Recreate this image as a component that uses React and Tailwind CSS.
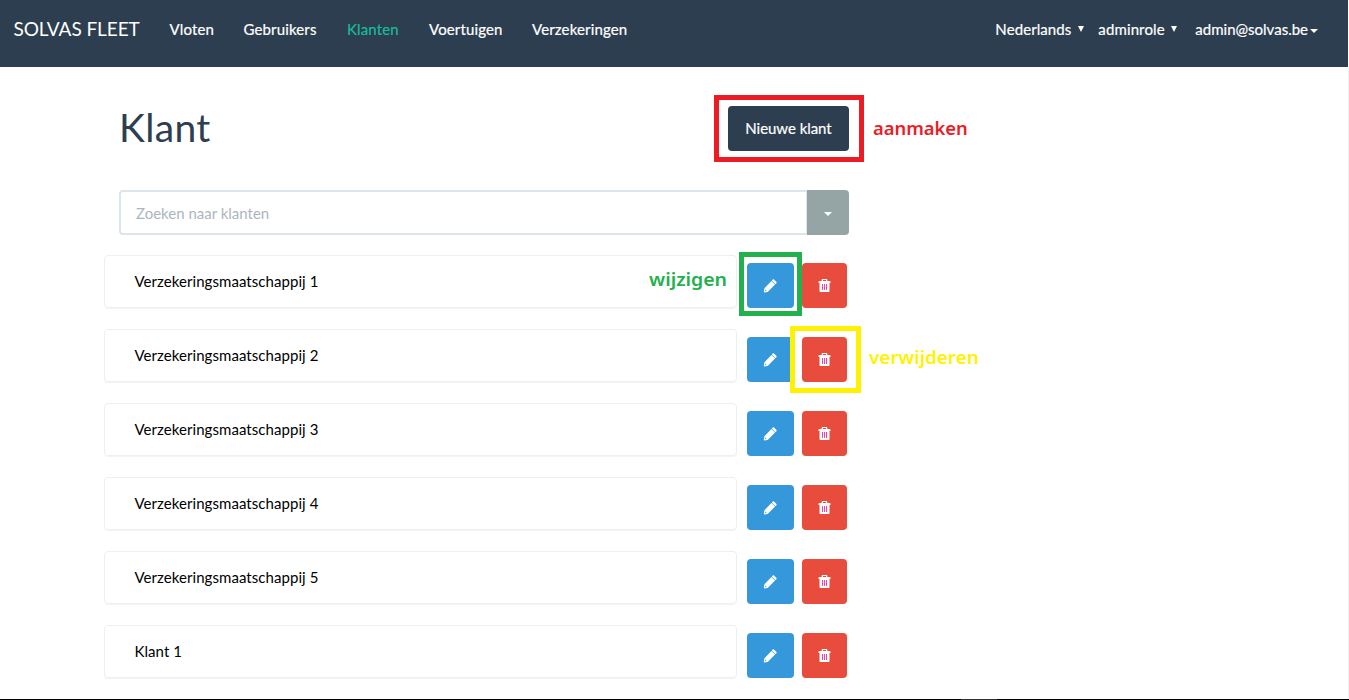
const navItems = [
  { label: "Vloten", width: "w-[74px]" },
  { label: "Gebruikers", width: "w-[103.5px]" },
  { label: "Klanten", width: "w-[82px]" },
  { label: "Voertuigen", width: "w-[103px]" },
  { label: "Verzekeringen", width: "w-[100px]" },
];

const customers = [
  "Verzekeringsmaatschappij 1",
  "Verzekeringsmaatschappij 2",
  "Verzekeringsmaatschappij 3",
  "Verzekeringsmaatschappij 4",
  "Verzekeringsmaatschappij 5",
  "Klant 1",
];

function Caret() {
  return (
    <svg className="h-1 w-2" viewBox="0 0 8 4" fill="currentColor">
      <path d="M0 0h8L4 4z" />
    </svg>
  );
}

function SelectArrow() {
  return (
    <svg className="mb-0.5 h-1.5 w-1.5" viewBox="0 0 6 6" fill="currentColor">
      <path d="M0 0h6L3 6z" />
    </svg>
  );
}

function PencilIcon() {
  return (
    <svg className="mr-px h-[14px] w-[14px]" viewBox="0 0 14 14" fill="#fff">
      <path d="M9.600.7c.5-.5 1.100-.5 1.600 0l2.100 2.100c.5.5.5 1.100 0 1.600l-.9.900-3.700-3.700z" />
      <path d="M8.400 1.900l3.700 3.700-6.700 6.700c-.3.3-.6.5-1 .6l-2.800.5c-.6.1-.9-.2-.8-.8l.5-2.800c.1-.4.3-.7.600-1z" />
      <path d="M2.300 10.600l1.300 1.300-.7.300-.9-.8z" fill="#3498db" />
    </svg>
  );
}

function TrashIcon() {
  return (
    <svg className="h-[13px] w-[13px]" viewBox="0 0 13 13" fill="#fff">
      <path d="M4.700 0h3.600c.7 0 1 .3 1 1v1h2.400c.5 0 .8.300.8.800V4H.5V2.800c0-.5.3-.8.8-.8h2.400V1c0-.7.3-1 1-1zm.3 1v1h3V1z" />
      <path d="M1.500 3.500h10V12c0 .6-.4 1-1 1h-8c-.6 0-1-.4-1-1z" />
      <path d="M4 5h1v6H4zM6 5h1v6H6zM8 5h1v6H8z" fill="#ef45a8" />
    </svg>
  );
}

export default function App() {
  return (
    <div className="relative flex h-[700px] w-[1349px] flex-col overflow-hidden bg-white font-['Lato',sans-serif] text-[15px] leading-[21px] text-black">
      <nav className="mr-px flex h-[67px] shrink-0 items-start justify-between bg-[#2c3e50] pt-[19px] text-white">
        <div className="flex">
          <a className="-mt-px w-[155px] pl-[13.5px] text-[19px] tracking-[-0.08px]">SOLVAS FLEET</a>
          <div className="flex pl-[14.5px] tracking-[0.14px] [-webkit-text-stroke:0.2px_currentColor]">
            {navItems.map(({ label, width }) => (
              <a key={label} className={`${width} ${label === "Klanten" ? "text-[#18bc9c]" : ""}`}>
                {label}
              </a>
            ))}
          </div>
        </div>
        <div className="flex pr-[30px] [-webkit-text-stroke:0.2px_currentColor]">
          <a className="flex w-[103px] items-center justify-between pr-[14px] tracking-[0.08px]">Nederlands <SelectArrow /></a>
          <a className="flex w-[97px] items-center justify-between pr-[18px] tracking-[0.12px]">adminrole <SelectArrow /></a>
          <a className="flex items-center gap-[2px]">admin@solvas.be <span className="pt-0.5"><Caret /></span></a>
        </div>
      </nav>

      <main className="min-h-0 grow border-r border-[#f0f0f0] pl-[104px]">
        <header className="ml-[15px] flex w-[730px] items-center justify-between pt-[39px]">
          <h1 className="-mt-0.5 text-[39px] leading-[45px] tracking-[0.35px] text-[#2c3e50]">Klant</h1>
          <button className="h-[45px] w-[121px] rounded bg-[#2c3e50] tracking-[-0.05px] text-white [-webkit-text-stroke:0.2px_currentColor]">
            Nieuwe klant
          </button>
        </header>

        <div className="mt-[39px] ml-[15px] flex h-[45px] w-[730px]">
          <input
            className="min-w-0 grow rounded-l border-2 border-r border-[#dce4ec] px-[15px] pt-0.5 placeholder:text-[#acb6c0] placeholder:opacity-100"
            placeholder="Zoeken naar klanten"
          />
          <button className="flex w-[42px] items-center justify-center rounded-r bg-[#95a5a6] pt-[3px] text-white">
            <Caret />
          </button>
        </div>

        <ul className="mt-5 flex flex-col gap-[21px]">
          {customers.map((name) => (
            <li key={name} className="flex h-[53px] items-end">
              <div className="h-[53px] w-[633px] rounded border border-[#ecf0f1] pt-[15px] pl-[29.500px] tracking-[0.06px] shadow-[0_1px_1px_rgba(0,0,0,0.05)]">
                {name}
              </div>
              <button className="ml-[10px] flex h-[45px] w-[47px] items-center justify-center rounded bg-[#3498db]">
                <PencilIcon />
              </button>
              <button className="ml-2 flex h-[45px] w-[45px] items-center justify-center rounded bg-[#e74c3c]">
                <TrashIcon />
              </button>
            </li>
          ))}
        </ul>
      </main>

      <footer className="flex h-px shrink-0 bg-black pl-[961px]">
        <span className="h-px w-9 bg-[#333]" />
      </footer>

      <div className="absolute top-[95px] left-[714px] h-[67px] w-[150px] border-5 border-[#ed1c24]" />
      <span className="absolute top-[116px] left-[873px] origin-left scale-x-[1.02] font-['Noto_Sans',sans-serif] text-[18px] leading-6 font-semibold text-[#ed1c24]">
        aanmaken
      </span>
      <div className="absolute top-[252px] left-[739px] h-16 w-[63px] border-5 border-[#22b14c]" />
      <span className="absolute top-[267px] left-[649px] origin-left scale-x-[1.08] font-['Noto_Sans',sans-serif] text-[18px] leading-6 font-semibold text-[#22b14c]">
        wijzigen
      </span>
      <div className="absolute top-[326px] left-[790px] h-[67px] w-[71px] border-5 border-[#fff200]" />
      <span className="absolute top-[345px] left-[869px] origin-left scale-x-[1.05] font-['Noto_Sans',sans-serif] text-[18px] leading-6 font-semibold text-[#fff200]">
        verwijderen
      </span>
    </div>
  );
}
